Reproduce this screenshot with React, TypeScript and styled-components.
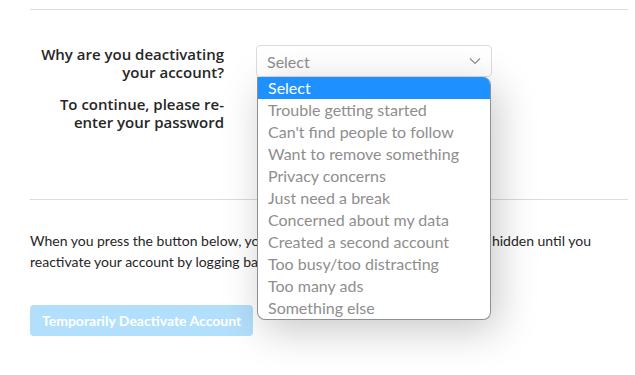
import styled, { createGlobalStyle } from 'styled-components';

const reasons = [
  'Select',
  'Trouble getting started',
  "Can't find people to follow",
  'Want to remove something',
  'Privacy concerns',
  'Just need a break',
  'Concerned about my data',
  'Created a second account',
  'Too busy/too distracting',
  'Too many ads',
  'Something else',
];

const GlobalStyle = createGlobalStyle`
  body {
    margin: 0;
    background: #fff;
    font-family: Lato, "Noto Sans", sans-serif;
  }
`;

const Page = styled.div`
  width: 635px;
  height: 375px;
  overflow: hidden;
  padding: 9px 7px 0 30px;
  box-sizing: border-box;
`;

const Divider = styled.hr`
  margin: 0;
  border: 0;
  border-top: 1px solid #dbdbdb;
`;

const Form = styled.div`
  display: grid;
  grid-template-columns: 194px 236px;
  column-gap: 32px;
  row-gap: 14px;
  padding: 35px 0 68px;
`;

const Label = styled.label`
  font-family: "Open Sans", sans-serif;
  font-size: 15px;
  font-weight: 600;
  line-height: 18px;
  color: #262626;
  text-align: right;
`;

const SelectWrap = styled.div`
  position: relative;
  align-self: start;
`;

const SelectBox = styled.div`
  height: 32px;
  box-sizing: border-box;
  border: 1px solid #dbdbdb;
  border-radius: 4px;
  display: flex;
  align-items: center;
  justify-content: space-between;
  padding: 0 10px;
  font-size: 16px;
  color: #8e8e8e;
`;

const Menu = styled.ul`
  position: absolute;
  top: 32px;
  left: 1px;
  width: 234px;
  margin: 0;
  padding: 0;
  list-style: none;
  background: #fff;
  border: 1px solid #8f8f8f;
  border-top: 0;
  border-radius: 0 8px 8px 8px;
  box-shadow: 6px 10px 40px rgba(0, 0, 0, 0.22);
  box-sizing: border-box;
  overflow: hidden;
  z-index: 2;
`;

const Option = styled.li<{ $active?: boolean }>`
  height: 22px;
  line-height: 22px;
  padding: 0 10px;
  font-size: 16px;
  color: ${({ $active }) => ($active ? '#fff' : '#8e8e8e')};
  background: ${({ $active }) => ($active ? '#1e90ff' : 'transparent')};
`;

const Notice = styled.p`
  margin: 30px 0 0;
  font-size: 14px;
  line-height: 21px;
  color: #262626;
  max-width: 590px;
`;

const DeactivateButton = styled.button`
  margin-top: 33px;
  height: 31px;
  padding: 0 12px;
  border: 0;
  border-radius: 4px;
  background: #b2dffc;
  color: #fff;
  font-family: inherit;
  font-size: 14px;
  font-weight: 700;
`;

const Chevron = () => (
  <svg width="12" height="8" viewBox="0 0 12 8">
    <path d="M1 1.5l5 5 5-5" fill="none" stroke="#8e8e8e" strokeWidth="1.2" />
  </svg>
);

export default function App() {
  return (
    <Page>
      <GlobalStyle />
      <Divider />
      <Form>
        <Label>Why are you deactivating your account?</Label>
        <SelectWrap>
          <SelectBox>
            <span>Select</span>
            <Chevron />
          </SelectBox>
          <Menu>
            {reasons.map((r, i) => (
              <Option key={r} $active={i === 0}>
                {r}
              </Option>
            ))}
          </Menu>
        </SelectWrap>
        <Label>To continue, please re-enter your password</Label>
        <div />
      </Form>
      <Divider />
      <Notice>
        When you press the button below, your photos, comments and likes will be hidden until you
        reactivate your account by logging back in.
      </Notice>
      <DeactivateButton>Temporarily Deactivate Account</DeactivateButton>
    </Page>
  );
}
